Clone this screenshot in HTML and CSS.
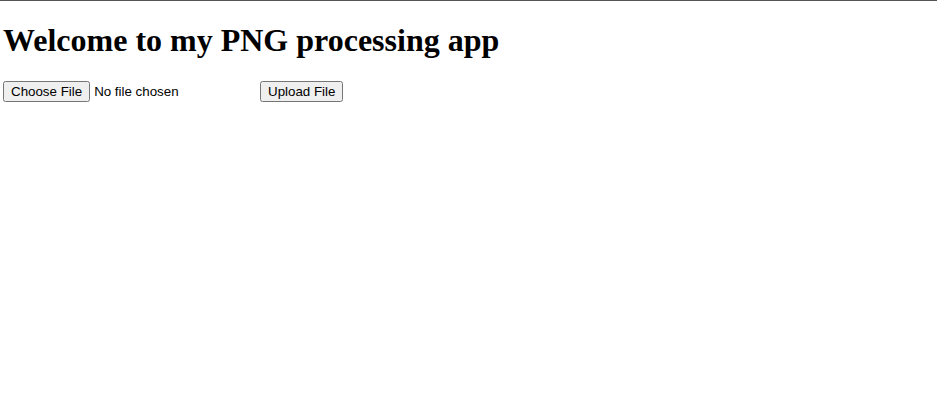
FILE: index.html
```html
<!DOCTYPE html>
<html>
<head>
<meta charset="utf-8">
<link rel="stylesheet" href="styles.css">
</head>
<body>
<div class="topline"></div>
<h1 class="title">Welcome to my PNG processing app</h1>
<form class="upload">
<input type="file" name="file"> <input type="submit" value="Upload File">
</form>
</body>
</html>
```
FILE: styles.css
```css
html, body {
  margin: 0;
  padding: 0;
  background: #fff;
}
body {
  font-family: "Liberation Serif", serif;
}
.topline {
  border-top: 1px solid #555;
}
.title {
  font-family: "Liberation Serif", serif;
  font-size: 32px;
  font-weight: bold;
  margin: 21px 3px 22px 3px;
}
.upload {
  margin: 0 3px;
}
```
